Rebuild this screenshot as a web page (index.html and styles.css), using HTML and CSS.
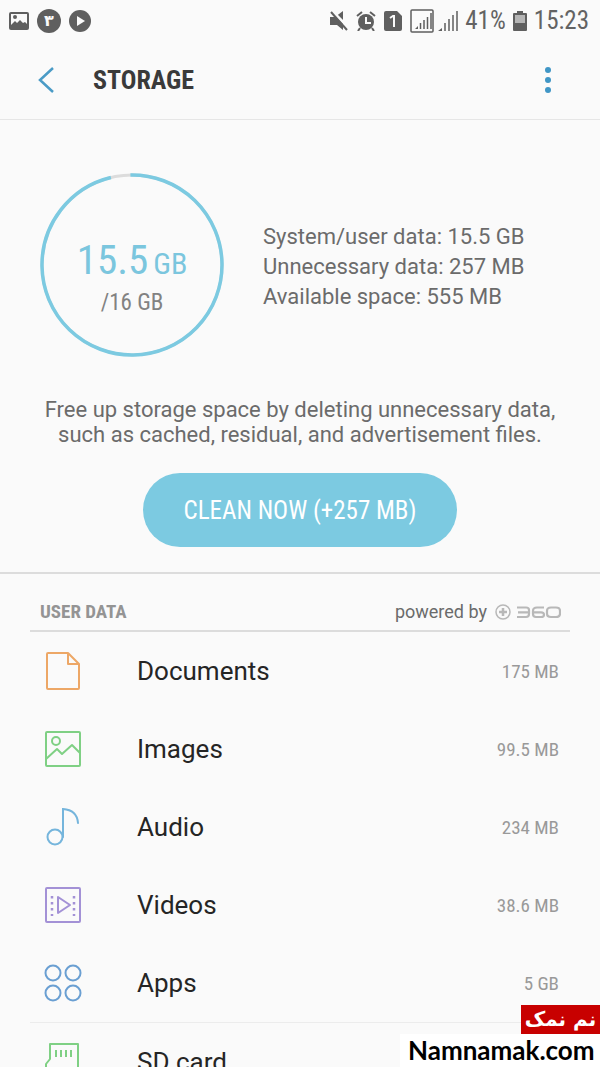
FILE: index.html
```html
<!DOCTYPE html>
<html lang="en">
<head>
    <meta charset="UTF-8">
    <meta name="viewport" content="width=device-width, initial-scale=1.0">
    <title>Storage</title>
    <link rel="stylesheet" href="styles.css">
</head>
<body>
    <!-- Status bar -->
    <div class="status">
        <div class="status-left">
            <svg width="20" height="18" viewBox="0 0 20 18"><rect width="20" height="18" rx="2" fill="#5f5f5f"/><path d="M2 2h16v10l-2-2-2 1-3-3-3 3-2-2-4 4z" fill="#fafafa"/><circle cx="6" cy="5" r="2" fill="#5f5f5f"/></svg>
            <span class="badge" lang="fa">۳</span>
            <svg width="22" height="22" viewBox="0 0 22 22"><circle cx="11" cy="11" r="11" fill="#5f5f5f"/><path d="M8 6l8 5-8 5z" fill="#fafafa"/></svg>
        </div>
        <div class="status-right">
            <div class="status-icons">
                <svg width="18" height="20" viewBox="0 0 18 20"><path d="M0 6h5l8-6v19l-6-5H0z" fill="#5f5f5f"/><path d="M2 0l16 16" stroke="#fafafa" stroke-width="3"/><path d="M1 1l16 18" stroke="#5f5f5f" stroke-width="2"/></svg>
                <svg width="20" height="20" viewBox="0 0 20 20"><circle cx="10" cy="11" r="8" fill="#5f5f5f"/><path d="M1 5l5-4M19 5l-5-4M4 17l-2 3M16 17l2 3" stroke="#5f5f5f" stroke-width="2"/><path d="M10 6v6h5" fill="none" stroke="#fafafa" stroke-width="2"/></svg>
                <svg width="18" height="20" viewBox="0 0 18 20"><path d="M2 0h11l5 5v13a2 2 0 0 1-2 2H2a2 2 0 0 1-2-2V2a2 2 0 0 1 2-2z" fill="#5f5f5f"/><path d="M6 7l3-2h1v11" fill="none" stroke="#fafafa" stroke-width="2"/></svg>
                <svg width="48" height="24" viewBox="0 0 48 24"><rect x="1" y="1" width="22" height="22" rx="1" fill="none" stroke="#5f5f5f" stroke-width="1.500"/><path d="M5 20l3-3v3zM28 22l4-3v3z" fill="#5f5f5f"/><path d="M10.500 20v-6M14 20v-9M17.500 20V8M21 20V4M35 22v-8M39 22V10M43 22V6M47 22V2" stroke="#5f5f5f" stroke-width="1.500"/></svg>
            </div>
            <span>41%</span>
            <svg width="14" height="20" viewBox="0 0 14 20"><path d="M4 0h6v2h3a1 1 0 0 1 1 1v16a1 1 0 0 1-1 1H1a1 1 0 0 1-1-1V3a1 1 0 0 1 1-1h3z" fill="#5f5f5f"/><path d="M2 4h10v8H2z" fill="#b5b5b5"/></svg>
            <span>15:23</span>
        </div>
    </div>

    <header>
        <button class="icon-button" aria-label="Back">
            <svg width="16" height="26" viewBox="0 0 16 26"><path d="M15 1L2 13l13 12" fill="none" stroke="#4a9bc6" stroke-width="2.5"/></svg>
        </button>
        <h1>STORAGE</h1>
        <button class="icon-button" aria-label="More options">
            <svg width="6" height="26" viewBox="0 0 6 26" fill="#4096c6"><circle cx="3" cy="3" r="3"/><circle cx="3" cy="13" r="3"/><circle cx="3" cy="23" r="3"/></svg>
        </button>
    </header>

    <!-- Usage summary -->
    <section class="summary">
        <div class="usage">
            <div class="ring">
                <svg viewBox="0 0 184 184"><circle cx="92" cy="92" r="90" fill="none" stroke="#dcdcdc" stroke-width="3"/><circle cx="92" cy="92" r="90" fill="none" stroke="#7ccae1" stroke-width="3.5" pathLength="100" stroke-dasharray="96.5 3.5" transform="rotate(-91 92 92)"/></svg>
                <div class="ring-text">
                    <p class="used">15.5<small>GB</small></p>
                    <p class="total">/16 GB</p>
                </div>
            </div>
            <ul class="details">
                <li>System/user data: 15.5 GB</li>
                <li>Unnecessary data: 257 MB</li>
                <li>Available space: 555 MB</li>
            </ul>
        </div>
        <p class="hint">Free up storage space by deleting unnecessary data, such as cached, residual, and advertisement files.</p>
        <button class="clean">CLEAN NOW (+257 MB)</button>
    </section>

    <!-- Categories -->
    <section class="data">
        <div class="data-head">
            <h2>USER DATA</h2>
            <p class="powered">powered by
                <svg width="66" height="16" viewBox="0 0 66 16" fill="none" stroke="#b8b8b8" role="img" aria-label="360"><circle cx="8" cy="8" r="7" stroke-width="1.5"/><path d="M8 4v8M4 8h8" stroke-width="2.5"/><path d="M22 3.500h9q3 0 3 2.500v4q0 3-3 3h-9M23 8.300h10M49 3.500h-7q-4 0-4 3.500v3q0 3 3 3h5q3 0 3-2.300t-3-2.400h-8M56 3.500h5q4 0 4 3.500v2.500q0 3.500-4 3.500h-5q-4 0-4-3.500V7q0-3.500 4-3.500z" stroke-width="2.200"/></svg>
            </p>
        </div>
        <ul class="list">
            <li><a href="#documents">
                <svg width="38" height="40" viewBox="0 0 38 40" fill="none" stroke="#eda766" stroke-width="2" stroke-linejoin="round"><path d="M4 2h20l11 11v24a1 1 0 0 1-1 1H4a1 1 0 0 1-1-1V3a1 1 0 0 1 1-1zM24 2v11h11"/></svg>
                <span class="name">Documents</span><span class="size">175 MB</span>
            </a></li>
            <li><a href="#images">
                <svg width="38" height="40" viewBox="0 0 38 40" fill="none" stroke="#7fd084" stroke-width="2" stroke-linejoin="round"><rect x="2" y="3" width="34" height="34" rx="1"/><circle cx="12" cy="12" r="4"/><path d="M2 30l11-10 5 5 10-9 8 8"/></svg>
                <span class="name">Images</span><span class="size">99.5 MB</span>
            </a></li>
            <li><a href="#audio">
                <svg width="38" height="40" viewBox="0 0 38 40" fill="none" stroke="#75b5dc" stroke-width="2" stroke-linecap="round"><circle cx="11" cy="30" r="7.500"/><path d="M19 30V2q14 1 15 14"/></svg>
                <span class="name">Audio</span><span class="size">234 MB</span>
            </a></li>
            <li><a href="#videos">
                <svg width="38" height="40" viewBox="0 0 38 40" fill="none" stroke="#a391d6" stroke-width="2" stroke-linejoin="round"><rect x="2" y="3" width="34" height="34" rx="1"/><path d="M14 12l12 8-12 8z"/><path d="M8 11v20M30 11v20" stroke-width="2.500" stroke-dasharray="2.500 3.500"/></svg>
                <span class="name">Videos</span><span class="size">38.6 MB</span>
            </a></li>
            <li><a href="#apps">
                <svg width="38" height="40" viewBox="0 0 38 40" fill="none" stroke="#6a9fd2" stroke-width="2"><circle cx="9" cy="10" r="7.500"/><circle cx="29" cy="10" r="7.500"/><circle cx="9" cy="30" r="7.500"/><circle cx="29" cy="30" r="7.500"/></svg>
                <span class="name">Apps</span><span class="size">5 GB</span>
            </a></li>
            <li class="external"><a href="#sdcard">
                <svg width="38" height="40" viewBox="0 0 38 40" fill="none" stroke="#7fd084" stroke-width="2" stroke-linejoin="round"><path d="M6 2h28v36H2V22l4-5zM12 8v7M17 8v7M22 8v7M27 8v7"/></svg>
                <span class="name">SD card</span>
            </a></li>
        </ul>
    </section>

    <div class="watermark">
        <span class="mark-fa" lang="fa" dir="rtl">نم نمک</span>
        <span class="mark-en">Namnamak.com</span>
    </div>
</body>
</html>
```

FILE: styles.css
```css
* {
    margin: 0;
    padding: 0;
    box-sizing: border-box;
}

body {
    height: 100vh;
    overflow: hidden;
    font-family: Roboto, sans-serif;
    background-color: #fafafa;
    color: #6b6b6b;
}

ul {
    list-style: none;
}

svg {
    display: block;
    flex-shrink: 0;
}

button {
    border: none;
    background: none;
    font: inherit;
    cursor: pointer;
}

/* Status bar */
.status {
    display: flex;
    justify-content: space-between;
    height: 41px;
    padding: 0 11px 0 9px;
    font-family: "Roboto Condensed", Roboto, sans-serif;
    font-size: 25px;
    color: #636363;
}

.status-left,
.status-right,
.status-icons {
    display: flex;
    align-items: center;
    gap: 8px;
}

.status-right {
    gap: 7px;
}

.badge {
    width: 24px;
    height: 24px;
    border-radius: 50%;
    background-color: #5f5f5f;
    color: #fafafa;
    font: bold 16px/24px "DejaVu Sans", sans-serif;
    text-align: center;
}

/* Title bar */
header {
    display: flex;
    align-items: center;
    height: 79px;
    padding: 0 32px 0 26px;
    border-bottom: 1px solid #e6e6e6;
}

.icon-button {
    display: flex;
    align-items: center;
    justify-content: center;
    width: 40px;
    height: 40px;
}

h1 {
    flex: 1;
    padding-left: 27px;
    font-family: "Roboto Condensed", Roboto, sans-serif;
    font-size: 26px;
    font-weight: bold;
    color: #3a3a3a;
}

/* Usage summary */
.summary {
    padding: 53px 40px 25px;
    border-bottom: 2px solid #dcdcdc;
    text-align: center;
}

.usage {
    display: flex;
    align-items: center;
    gap: 39px;
    text-align: left;
}

.ring {
    display: grid;
    width: 184px;
    height: 184px;
}

.ring svg,
.ring-text {
    grid-area: 1 / 1;
}

.ring-text {
    padding-top: 64px;
    font-family: "Roboto Condensed", Roboto, sans-serif;
    text-align: center;
}

.used {
    font-size: 41px;
    line-height: 46px;
    color: #7bc6de;
}

.used small {
    padding-left: 5px;
    font-size: 30px;
}

.total {
    font-size: 23px;
    line-height: 32px;
    color: #828282;
}

.details {
    padding-top: 4px;
    font-size: 22px;
    line-height: 30px;
}

.hint {
    margin-top: 40px;
    font-size: 22px;
    line-height: 25px;
}

.clean {
    min-width: 314px;
    height: 74px;
    margin-top: 26px;
    border-radius: 37px;
    background-color: #7ccae1;
    color: #fff;
    font-family: "Roboto Condensed", Roboto, sans-serif;
    font-size: 25px;
}

/* Categories */
.data {
    padding: 19px 30px 0;
}

.data-head {
    display: flex;
    align-items: center;
    justify-content: space-between;
    height: 39px;
    padding: 0 9px 0 10px;
    border-bottom: 2px solid #dcdcdc;
}

h2 {
    font-family: "Roboto Condensed", Roboto, sans-serif;
    font-size: 19px;
    font-weight: bold;
    color: #949494;
}

.powered {
    display: flex;
    align-items: center;
    gap: 8px;
    font-size: 18px;
}

.list a {
    display: flex;
    align-items: center;
    height: 78px;
    padding: 0 11px 0 14px;
    color: #252525;
    text-decoration: none;
}

.name {
    flex: 1;
    padding-left: 55px;
    font-size: 26px;
}

.size {
    font-family: "Roboto Condensed", Roboto, sans-serif;
    font-size: 19px;
    color: #999;
}

.external {
    border-top: 1px solid #ececec;
}

/* Site mark in the corner */
.watermark {
    position: fixed;
    right: 0;
    bottom: 0;
    display: flex;
    flex-direction: column;
    align-items: flex-end;
}

.mark-fa {
    width: 79px;
    height: 29px;
    background-color: #c80000;
    color: #fff;
    font: bold 20px/28px "DejaVu Sans", sans-serif;
    text-align: center;
    white-space: nowrap;
}

.mark-en {
    width: 200px;
    height: 33px;
    padding-left: 8px;
    background-color: #fff;
    color: #000;
    font: bold 26px/32px Lato, sans-serif;
}
```
